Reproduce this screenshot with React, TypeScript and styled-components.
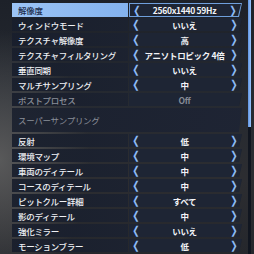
import React from "react";
import styled, { createGlobalStyle } from "styled-components";

const Global = createGlobalStyle`
  html, body { margin: 0; padding: 0; }
  body {
    width: 254px; height: 254px; overflow: hidden;
    background:
      radial-gradient(ellipse 90px 130px at 0px 160px, rgba(100,100,100,0.8), rgba(60,60,62,0) 100%),
      linear-gradient(180deg, #1d2129 0%, #262a31 40%, #2c2d31 70%, #25272c 100%);
    font-family: "Noto Sans CJK JP", "Noto Sans", sans-serif;
  }
`;

const Screen = styled.div`
  position: relative;
  width: 254px;
  height: 254px;
  padding: 3px 0 0 12px;
  box-sizing: border-box;
  display: flex;
  flex-direction: column;
  gap: 2px;
`;

const Row = styled.div`
  display: grid;
  grid-template-columns: 116px 116px;
  height: 13px;
`;

const Label = styled.div<{ $active?: boolean; $dim?: boolean }>`
  display: flex;
  align-items: center;
  padding-left: 6px;
  font-size: 8.5px;
  font-weight: 500;
  letter-spacing: -0.3px;
  color: ${(p) => (p.$active ? "#1b2c4c" : p.$dim ? "#8a8f99" : "#eef0f4")};
  background: ${(p) =>
    p.$active
      ? "linear-gradient(90deg, #9cc4f6, #83b2ee)"
      : "linear-gradient(90deg, rgba(24,30,44,0.92), rgba(28,34,48,0.95))"};
  white-space: nowrap;
`;

const ValueOuter = styled.div<{ $active?: boolean }>`
  clip-path: polygon(0 0, 100% 0, calc(100% - 3px) 100%, 0 100%);
  background: ${(p) => (p.$active ? "#6f9fdc" : "rgba(30,36,50,0.95)")};
  padding: ${(p) => (p.$active ? "1px" : "0")};
  margin-left: 1px;
  margin-right: 2px;
`;

const ValueInner = styled.div`
  clip-path: polygon(0 0, 100% 0, calc(100% - 3px) 100%, 0 100%);
  height: 100%;
  background: #1e2534;
  display: grid;
  grid-template-columns: 14px 1fr 16px;
  align-items: center;
`;

const Arrow = styled.span`
  color: #8dbaf5;
  font-family: "DejaVu Sans", sans-serif;
  font-size: 11px;
  font-weight: 700;
  line-height: 1;
  text-align: center;
  transform: scaleX(0.8);
`;

const Val = styled.span<{ $dim?: boolean }>`
  text-align: center;
  font-size: 8.5px;
  font-weight: 700;
  letter-spacing: -0.3px;
  color: ${(p) => (p.$dim ? "#868b95" : "#f2f3f6")};
  white-space: nowrap;
`;

const Section = styled.div`
  height: 24px;
  width: 230px;
  clip-path: polygon(0 0, 100% 0, calc(100% - 3px) 100%, 0 100%);
  background: linear-gradient(90deg, rgba(26,32,46,0.9), rgba(30,36,52,0.95));
  display: flex;
  align-items: center;
  padding-left: 6px;
  box-sizing: border-box;
  font-size: 8.5px;
  color: #8a8f99;
  letter-spacing: -0.3px;
`;

const ScrollTrack = styled.div`
  position: absolute;
  right: 3px;
  top: 0;
  width: 3px;
  height: 254px;
  background: #10151f;
`;

const ScrollThumb = styled.div`
  width: 3px;
  height: 127px;
  background: linear-gradient(90deg, #5e93e0, #9cc6ff);
`;

type Item = { label: string; value: string; active?: boolean; dim?: boolean };

const top: Item[] = [
  { label: "解像度", value: "2560x1440 59Hz", active: true },
  { label: "ウィンドウモード", value: "いいえ" },
  { label: "テクスチャ解像度", value: "高" },
  { label: "テクスチャフィルタリング", value: "アニソトロピック 4倍" },
  { label: "垂直同期", value: "いいえ" },
  { label: "マルチサンプリング", value: "中" },
  { label: "ポストプロセス", value: "Off", dim: true },
];

const bottom: Item[] = [
  { label: "反射", value: "低" },
  { label: "環境マップ", value: "中" },
  { label: "車両のディテール", value: "中" },
  { label: "コースのディテール", value: "中" },
  { label: "ピットクルー詳細", value: "すべて" },
  { label: "影のディテール", value: "中" },
  { label: "強化ミラー", value: "いいえ" },
  { label: "モーションブラー", value: "低" },
];

const SettingRow = ({ item }: { item: Item }) => (
  <Row>
    <Label $active={item.active} $dim={item.dim}>{item.label}</Label>
    <ValueOuter $active={item.active}>
      <ValueInner>
        <Arrow>{item.dim ? "" : "❮"}</Arrow>
        <Val $dim={item.dim}>{item.value}</Val>
        <Arrow>{item.dim ? "" : "❯"}</Arrow>
      </ValueInner>
    </ValueOuter>
  </Row>
);

export default function App() {
  return (
    <>
      <Global />
      <Screen>
        {top.map((it) => (
          <SettingRow key={it.label} item={it} />
        ))}
        <Section>スーパーサンプリング</Section>
        {bottom.map((it) => (
          <SettingRow key={it.label} item={it} />
        ))}
        <ScrollTrack>
          <ScrollThumb />
        </ScrollTrack>
      </Screen>
    </>
  );
}
